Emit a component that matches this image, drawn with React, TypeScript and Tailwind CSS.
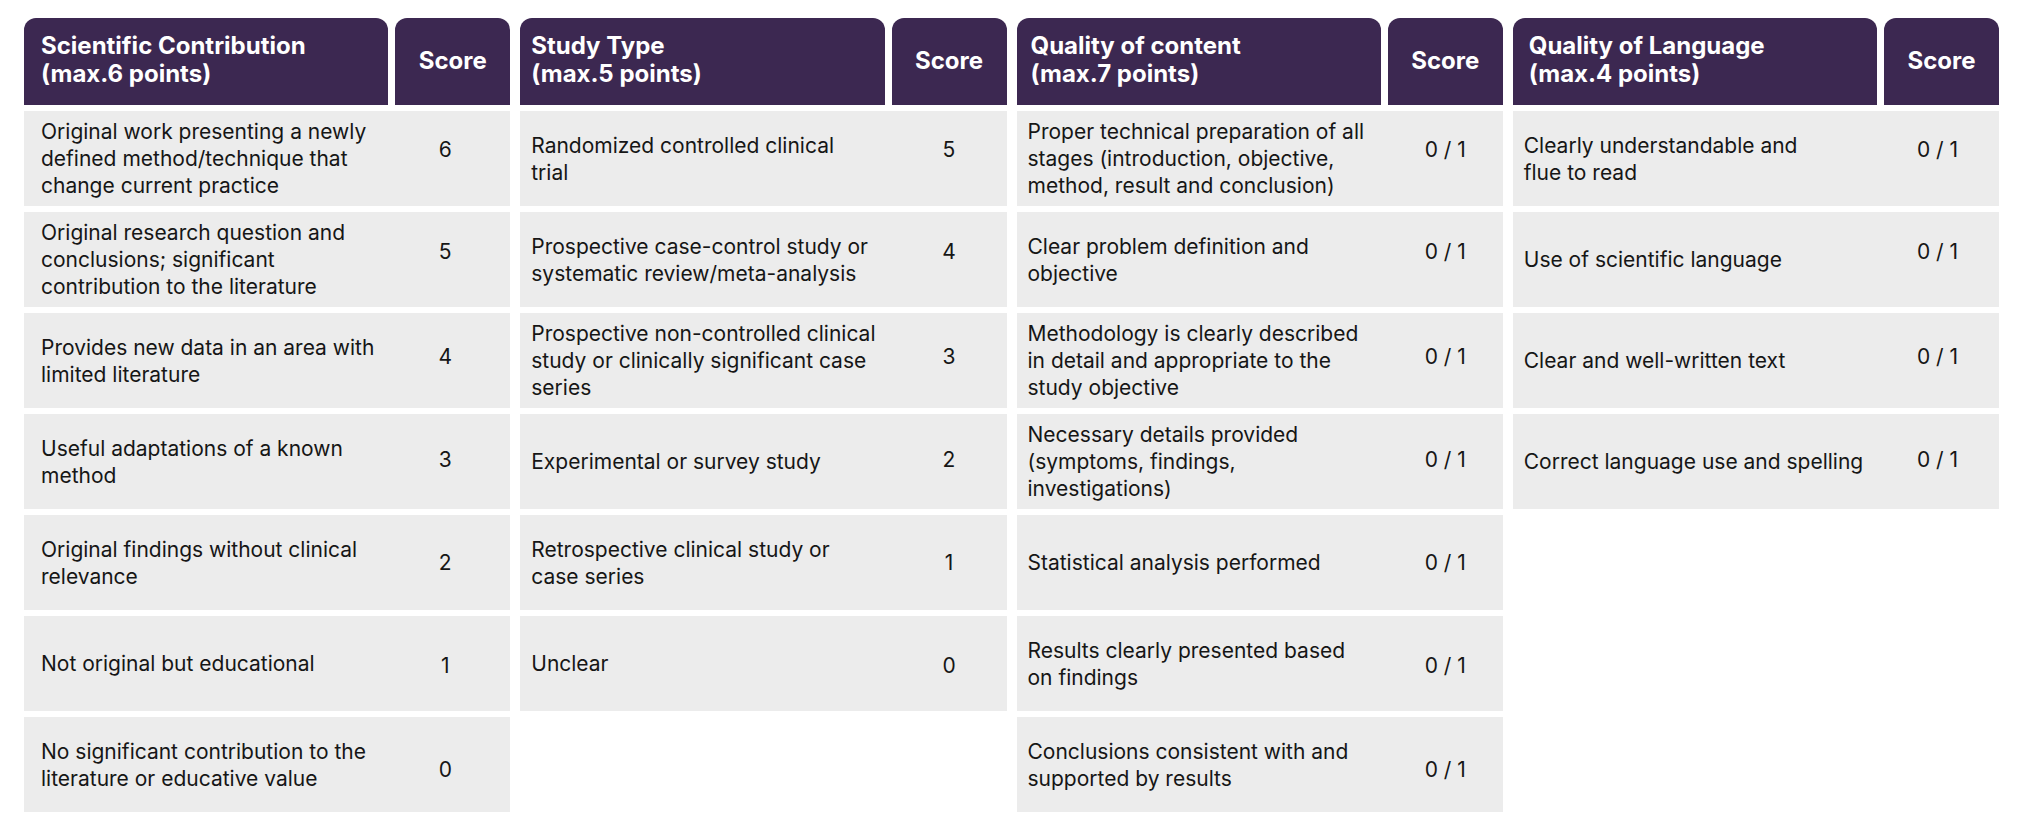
import React from "react";

type Row = { lines: string[]; score: string };
type Table = {
  title: string;
  sub: string;
  headPad: string;
  bodyPad: string;
  scorePad: string;
  rows: Row[];
};

const scoreShift = [
  "pb-[18px]",
  "pb-[17px]",
  "pb-[9px]",
  "pb-[4px]",
  "pb-0",
  "pt-[3px]",
  "pt-[10px]",
];

const tables: Table[] = [
  {
    title: "Scientific Contribution",
    sub: "(max.6 points)",
    headPad: "pl-[17px]",
    bodyPad: "pl-[17px]",
    scorePad: "pr-[15px]",
    rows: [
      { lines: ["Original work presenting a newly", "defined method/technique that", "change current practice"], score: "6" },
      { lines: ["Original research question and", "conclusions; significant", "contribution to the literature"], score: "5" },
      { lines: ["Provides new data in an area with", "limited literature"], score: "4" },
      { lines: ["Useful adaptations of a known", "method"], score: "3" },
      { lines: ["Original findings without clinical", "relevance"], score: "2" },
      { lines: ["Not original but educational"], score: "1" },
      { lines: ["No significant contribution to the", "literature or educative value"], score: "0" },
    ],
  },
  {
    title: "Study Type",
    sub: "(max.5 points)",
    headPad: "pl-[11px]",
    bodyPad: "pl-[11px]",
    scorePad: "pr-0",
    rows: [
      { lines: ["Randomized controlled clinical", "trial"], score: "5" },
      { lines: ["Prospective case-control study or", "systematic review/meta-analysis"], score: "4" },
      { lines: ["Prospective non-controlled clinical", "study or clinically significant case", "series"], score: "3" },
      { lines: ["Experimental or survey study"], score: "2" },
      { lines: ["Retrospective clinical study or", "case series"], score: "1" },
      { lines: ["Unclear"], score: "0" },
    ],
  },
  {
    title: "Quality of content",
    sub: "(max.7 points)",
    headPad: "pl-[14px]",
    bodyPad: "pl-[11px]",
    scorePad: "pr-0",
    rows: [
      { lines: ["Proper technical preparation of all", "stages (introduction, objective,", "method, result and conclusion)"], score: "0 / 1" },
      { lines: ["Clear problem definition and", "objective"], score: "0 / 1" },
      { lines: ["Methodology is clearly described", "in detail and appropriate to the", "study objective"], score: "0 / 1" },
      { lines: ["Necessary details provided", "(symptoms, findings,", "investigations)"], score: "0 / 1" },
      { lines: ["Statistical analysis performed"], score: "0 / 1" },
      { lines: ["Results clearly presented based", "on findings"], score: "0 / 1" },
      { lines: ["Conclusions consistent with and", "supported by results"], score: "0 / 1" },
    ],
  },
  {
    title: "Quality of Language",
    sub: "(max.4 points)",
    headPad: "pl-[16px]",
    bodyPad: "pl-[11px]",
    scorePad: "pr-[8px]",
    rows: [
      { lines: ["Clearly understandable and", "flue to read"], score: "0 / 1" },
      { lines: ["Use of scientific language"], score: "0 / 1" },
      { lines: ["Clear and well-written text"], score: "0 / 1" },
      { lines: ["Correct language use and spelling"], score: "0 / 1" },
    ],
  },
];

function TableBlock({ t }: { t: Table }) {
  return (
    <div className="flex flex-col gap-[6px]">
      <div className="flex h-[87px] gap-[7px]">
        <div
          className={`flex flex-1 flex-col justify-center rounded-t-[12px] bg-[#3c2851] ${t.headPad} pb-[4px] text-[24px] font-bold leading-[28px] text-white`}
        >
          <div>{t.title}</div>
          <div>{t.sub}</div>
        </div>
        <div className="flex w-[115px] items-center justify-center rounded-t-[12px] bg-[#3c2851] pb-[2px] text-[24px] font-bold text-white">
          Score
        </div>
      </div>
      {t.rows.map((r, i) => (
        <div key={i} className="flex h-[95px] bg-[#ececec] text-[#161616]">
          <div
            className={`flex flex-1 flex-col justify-center ${t.bodyPad} whitespace-nowrap text-[21px] leading-[27px]`}
          >
            {r.lines.map((l, j) => (
              <div key={j}>{l}</div>
            ))}
          </div>
          <div
            className={`flex w-[115px] items-center justify-center ${t.scorePad} ${scoreShift[i]} text-[21px] leading-[27px]`}
          >
            {r.score}
          </div>
        </div>
      ))}
    </div>
  );
}

export default function App() {
  return (
    <div
      className="min-h-[832px] w-[2023px] bg-white px-6 pt-[18px]"
      style={{ fontFamily: "Inter, 'Noto Sans', sans-serif" }}
    >
      <div className="grid grid-cols-4 items-start gap-x-[10px]">
        {tables.map((t, i) => (
          <TableBlock key={i} t={t} />
        ))}
      </div>
    </div>
  );
}
